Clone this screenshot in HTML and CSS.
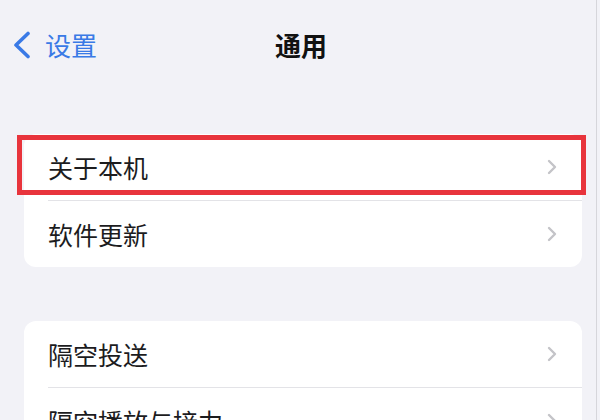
FILE: index.html
```html
<!DOCTYPE html>
<html lang="zh-CN">
<head>
    <meta charset="UTF-8">
    <meta name="viewport" content="width=device-width, initial-scale=1.0">
    <title>通用</title>
    <link rel="stylesheet" href="styles.css">
</head>
<body>
    <div class="screen">
        <nav class="nav">
            <a class="back" href="#">
                <svg class="back-icon" width="18" height="28" viewBox="0 0 18 28">
                    <polyline points="15,2.5 3,14 15,25.5" />
                </svg>
                <span>设置</span>
            </a>
            <h1 class="title">通用</h1>
            <div></div>
        </nav>

        <div class="group">
            <div class="highlight"></div>
            <div class="row">
                <span class="label">关于本机</span>
                <svg class="chevron" width="10" height="16" viewBox="0 0 10 16"><polyline points="2,2 8,8 2,14" /></svg>
            </div>
            <div class="row">
                <span class="label">软件更新</span>
                <svg class="chevron" width="10" height="16" viewBox="0 0 10 16"><polyline points="2,2 8,8 2,14" /></svg>
            </div>
        </div>

        <div class="group">
            <div class="row">
                <span class="label">隔空投送</span>
                <svg class="chevron" width="10" height="16" viewBox="0 0 10 16"><polyline points="2,2 8,8 2,14" /></svg>
            </div>
            <div class="row">
                <span class="label">隔空播放与接力</span>
                <svg class="chevron" width="10" height="16" viewBox="0 0 10 16"><polyline points="2,2 8,8 2,14" /></svg>
            </div>
        </div>
    </div>
</body>
</html>
```

FILE: styles.css
```css
*{
    margin: 0;
    padding: 0;
    box-sizing: border-box;
}
body{
    background-color: #f2f2f7;
    font-family: "Noto Sans CJK SC", "Noto Sans", sans-serif;
    color: #1c1c1e;
    overflow: hidden;
}
.screen{
    width: 597px;
    height: 420px;
    border-right: 1px solid #d6d6db;
    overflow: hidden;
}

/* top bar */
.nav{
    display: grid;
    grid-template-columns: 1fr auto 1fr;
    align-items: center;
    height: 94px;
    padding-bottom: 5px;
}
.back{
    display: flex;
    align-items: center;
    gap: 14px;
    padding-left: 13px;
    color: #3a7ae6;
    text-decoration: none;
    font-size: 26px;
}
.back-icon polyline{
    fill: none;
    stroke: #3a7ae6;
    stroke-width: 3.6;
    stroke-linecap: round;
    stroke-linejoin: round;
}
.title{
    padding-left: 6px;
    font-size: 26px;
    font-weight: 700;
    color: #111;
}

/* grouped list */
.group{
    position: relative;
    width: 558px;
    margin-left: 24px;
    margin-top: 40px;
    background-color: #fff;
    border-radius: 12px;
}
.group + .group{
    margin-top: 54px;
}
.row{
    display: flex;
    align-items: center;
    height: 66px;
    margin-left: 24px;
    padding-right: 25px;
    font-size: 25px;
}
.row + .row{
    height: 67px;
    border-top: 1px solid #e3e3e7;
}
.label{
    flex: 1;
}
.chevron polyline{
    fill: none;
    stroke: #c4c4c8;
    stroke-width: 2.4;
    stroke-linecap: round;
    stroke-linejoin: round;
}

/* red marker around the first row */
.highlight{
    position: absolute;
    top: 1px;
    left: -7px;
    width: 569px;
    height: 60px;
    border: 5px solid #e8343c;
    pointer-events: none;
}
```
